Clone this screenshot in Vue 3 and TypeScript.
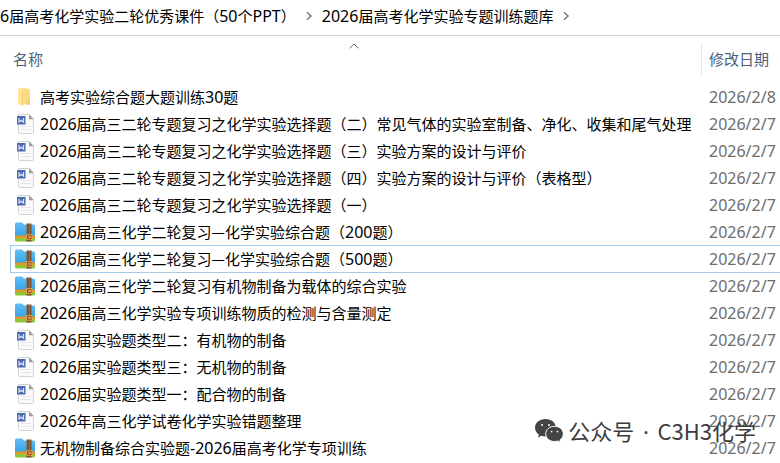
<script setup lang="ts">
import { computed, ref } from 'vue'

type Kind = 'folder' | 'doc' | 'zip'
interface Entry { kind: Kind; name: string; date: string }
interface Run { latin: boolean; text: string }

const crumbs: string[] = ['6届高考化学实验二轮优秀课件（50个PPT）', '2026届高考化学实验专题训练题库']

const entries: Entry[] = [
  { kind: 'folder', name: '高考实验综合题大题训练30题', date: '2026/2/8' },
  { kind: 'doc', name: '2026届高三二轮专题复习之化学实验选择题（二）常见气体的实验室制备、净化、收集和尾气处理', date: '2026/2/7' },
  { kind: 'doc', name: '2026届高三二轮专题复习之化学实验选择题（三）实验方案的设计与评价', date: '2026/2/7' },
  { kind: 'doc', name: '2026届高三二轮专题复习之化学实验选择题（四）实验方案的设计与评价（表格型）', date: '2026/2/7' },
  { kind: 'doc', name: '2026届高三二轮专题复习之化学实验选择题（一）', date: '2026/2/7' },
  { kind: 'zip', name: '2026届高三化学二轮复习—化学实验综合题（200题）', date: '2026/2/7' },
  { kind: 'zip', name: '2026届高三化学二轮复习—化学实验综合题（500题）', date: '2026/2/7' },
  { kind: 'zip', name: '2026届高三化学二轮复习有机物制备为载体的综合实验', date: '2026/2/7' },
  { kind: 'zip', name: '2026届高三化学实验专项训练物质的检测与含量测定', date: '2026/2/7' },
  { kind: 'doc', name: '2026届实验题类型二：有机物的制备', date: '2026/2/7' },
  { kind: 'doc', name: '2026届实验题类型三：无机物的制备', date: '2026/2/7' },
  { kind: 'doc', name: '2026届实验题类型一：配合物的制备', date: '2026/2/7' },
  { kind: 'doc', name: '2026年高三化学试卷化学实验错题整理', date: '2026/2/7' },
  { kind: 'zip', name: '无机物制备综合实验题-2026届高考化学专项训练', date: '2026/2/7' },
]

const selected = ref(6)

// Latin letters and digits are set in their own face beside the Chinese text.
function toRuns(text: string): Run[] {
  return (text.match(/[\x20-\x7e]+|[^\x20-\x7e]+/g) ?? []).map((part) => ({
    latin: /^[\x20-\x7e]/.test(part),
    text: part,
  }))
}

const crumbRuns = computed(() => crumbs.map(toRuns))
const rows = computed(() => entries.map((entry) => ({ ...entry, runs: toRuns(entry.name) })))
</script>

<template>
  <main class="explorer">
    <svg class="defs" width="0" height="0" aria-hidden="true">
      <linearGradient id="zip-blue" x1="0" y1="0" x2="0" y2="1">
        <stop offset="0" stop-color="#62bdf5" />
        <stop offset="1" stop-color="#36a3e6" />
      </linearGradient>
    </svg>
    <nav class="crumbs">
      <template v-for="(runs, i) in crumbRuns" :key="i">
        <a href="#" class="crumb" @click.prevent><span v-for="(run, j) in runs" :key="j" :class="{ latin: run.latin }">{{ run.text }}</span></a>
        <svg class="chevron" viewBox="0 0 8 10" width="8" height="10"><path d="M2 1.200 6 5 2 8.800" fill="none" stroke="#777" stroke-width="1.500" /></svg>
      </template>
    </nav>

    <table class="files">
      <colgroup>
        <col />
        <col class="date-col" />
      </colgroup>
      <thead>
        <tr>
          <th scope="col">
            <button type="button" class="head">名称</button>
            <svg class="sort" viewBox="0 0 10 6" width="10" height="6"><path d="M.6 5.300 5 1l4.400 4.300" fill="none" stroke="#666" stroke-width="1" /></svg>
          </th>
          <th scope="col" class="date-head"><button type="button" class="head">修改日期</button></th>
        </tr>
      </thead>
      <tbody>
        <tr v-for="(row, i) in rows" :key="row.name" :class="{ selected: i === selected }" @click="selected = i">
          <td>
            <div class="entry">
              <svg v-if="row.kind === 'folder'" class="icon" viewBox="0 0 22 22" width="22" height="22">
                <path d="M4 2.500h9.500v14H16V4H6z" fill="#f3cf70" />
                <path d="M7 3h9v15.500H8z" fill="#fbdc83" />
                <path d="M13 14.500h3v4h-3z" fill="#f2cb63" />
                <path d="M4 2.500 8.300 5v15L4 18z" fill="#ffe49b" />
                <path d="M8.300 5v14.500" stroke="#e9c15b" stroke-width=".6" />
              </svg>
              <svg v-else-if="row.kind === 'doc'" class="icon" viewBox="0 0 22 22" width="22" height="22">
                <path d="M4.500 1.500H15l4.500 4.700v13.300q0 1-1 1h-13q-1 0-1-1z" fill="#fafafa" stroke="#d2d2d4" />
                <path d="M15 1.200 19.800 6.300H15z" fill="#979a9f" />
                <path d="M7 13.500h10M7 16.500h10" stroke="#e6e6e8" />
                <path d="M3 3h8.500v8.500H3z" fill="#4d69af" />
                <path d="M5 5v4l2.200-1.800L9.500 9V5" fill="none" stroke="#dfe6f7" stroke-width="1.200" />
              </svg>
              <svg v-else class="icon" viewBox="0 0 22 22" width="22" height="22">
                <path d="M1 3Q1 1.500 2.500 1.500h5.500l2 2h9.500Q21 3.500 21 5v11H1z" fill="url(#zip-blue)" />
                <path d="M1 14.500h20v3H1z" fill="#e3952f" />
                <path d="M1 17h20v2q0 1.500-1.500 1.500h-17Q1 20.500 1 19z" fill="#8cc63a" />
                <path d="M12.500 2.500h5v18h-5z" fill="#7c5432" />
                <path d="M15.500 3v11" stroke="#a87c4c" stroke-dasharray="1 1" />
                <path d="M12.500 13.700h5.500v4.600h-5.500z" fill="#8c4b16" stroke="#f0a040" />
                <path d="M14 16h3" stroke="#ffe1a0" />
              </svg>
              <span class="name"><span v-for="(run, j) in row.runs" :key="j" :class="{ latin: run.latin }">{{ run.text }}</span></span>
            </div>
          </td>
          <td class="date">{{ row.date }}</td>
        </tr>
      </tbody>
    </table>

    <div class="watermark">
      <svg viewBox="0 0 30 26" width="30" height="26">
        <path d="M11.500 1C5.500 1 1 4.900 1 9.800c0 2.800 1.500 5.200 3.900 6.800l-1 3 3.600-1.800c1.300.4 2.600.6 4 .6 6 0 10.500-3.800 10.500-8.600S17.500 1 11.500 1z" fill="#444" />
        <path d="M20.500 8.300c-5 0-8.800 3.400-8.800 7.600s3.800 7.600 8.800 7.600c1.100 0 2.200-.2 3.200-.5l3 1.600-.8-2.600c2.100-1.400 3.400-3.600 3.400-6.100 0-4.200-3.800-7.600-8.800-7.600z" fill="#444" stroke="#fff" />
        <g fill="#fff"><circle cx="8" cy="7" r="1" /><circle cx="15" cy="7" r="1" /><circle cx="17.600" cy="13.600" r=".9" /><circle cx="23.400" cy="13.600" r=".9" /></g>
      </svg>
      <span>公众号<span class="dot"> · </span>C3H3化学</span>
    </div>
  </main>
</template>

<style>
body {
  margin: 0;
  background: #fff;
}
</style>

<style scoped>
.explorer {
  position: relative;
  overflow: hidden;
  font: 15px/20px "Noto Sans CJK SC", sans-serif;
  color: #000;
}
.defs {
  position: absolute;
}
.latin {
  font-family: "Noto Sans", "Noto Sans CJK SC", sans-serif;
  font-size: 16px;
}
.crumbs {
  display: flex;
  align-items: center;
  height: 36px;
  padding-bottom: 4px;
  box-sizing: border-box;
  border-bottom: 1px solid #d4d4d4;
  white-space: nowrap;
}
.crumb {
  color: inherit;
  text-decoration: none;
}
.chevron {
  margin: 0 9px;
  flex: none;
}
.files {
  width: 100%;
  padding-left: 10px;
  table-layout: fixed;
  border-collapse: separate;
  border-spacing: 0;
}
.date-col {
  width: 79px;
}
th {
  position: relative;
  height: 45px;
  padding: 0 0 2px;
  text-align: left;
  font-weight: 400;
}
.head {
  padding: 0 3px;
  border: 0;
  background: none;
  font: inherit;
  color: #4c607a;
}
.date-head .head {
  width: 100%;
  height: 32px;
  padding: 0 0 0 7px;
  border-left: 1px solid #e2e2e2;
  text-align: left;
  white-space: nowrap;
}
.sort {
  position: absolute;
  top: 7px;
  left: calc(50% - 7px);
}
td {
  height: 27px;
  padding: 0;
  white-space: nowrap;
}
.entry {
  display: flex;
  align-items: center;
  gap: 4px;
  padding-left: 4px;
}
.icon {
  flex: none;
}
.date {
  padding-left: 8px;
  font-family: "Noto Sans", sans-serif;
  font-size: 16px;
  color: #6d6d6d;
}
.selected td {
  box-shadow: inset 0 1px 0 #a5c9e9, 0 1px 0 #a5c9e9;
}
.selected td:first-child {
  box-shadow: inset 1px 1px 0 #a5c9e9, 0 1px 0 #a5c9e9;
}
.watermark {
  position: absolute;
  right: 24px;
  bottom: 14px;
  display: flex;
  align-items: center;
  gap: 4px;
  font-size: 22px;
  line-height: 32px;
  color: #3c3c3c;
  white-space: nowrap;
  pointer-events: none;
}
.dot {
  padding: 0 3px;
  font-family: "Noto Sans", sans-serif;
}
</style>
